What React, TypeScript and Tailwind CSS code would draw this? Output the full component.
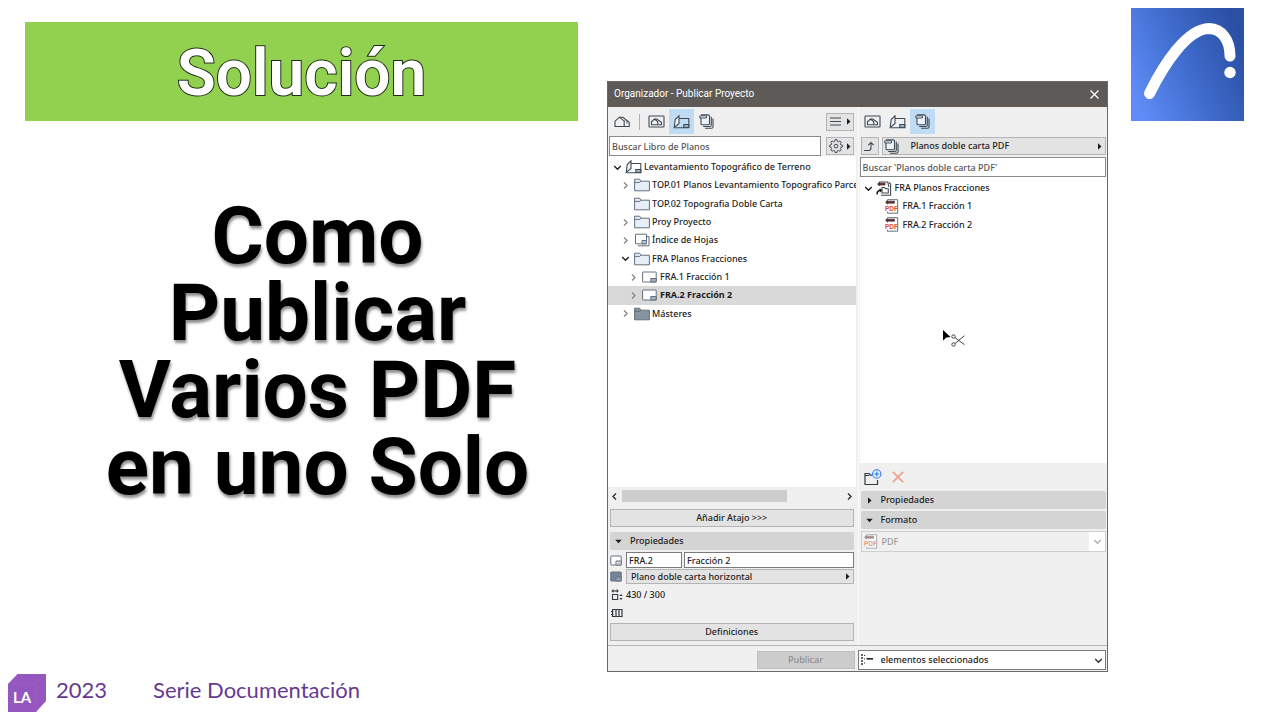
import type { ReactNode } from "react";
import clsx from "clsx";

const INK = "#3f4a55";

interface IconProps {
  className?: string;
}

/* ---------- Toolbar and tree icons ---------- */

function HouseIcon() {
  return (
    <svg width="17" height="13" viewBox="0 0 17 13" fill="none" stroke={INK} strokeWidth="1.1">
      <path d="M1 11.5V6.2L5.5 2.2l4.7 4v5.3zM5.5 2.2h3.4l6.3 5v4.3h-5" />
      <path d="M10.2 6.2l1.6-1.600M13 5.600v3" strokeWidth=".8" />
    </svg>
  );
}

function ViewIcon() {
  return (
    <svg width="17" height="13" viewBox="0 0 17 13" fill="none" stroke={INK} strokeWidth="1.1">
      <rect x="1" y="1" width="15" height="11" rx=".5" />
      <path d="M3.5 9.8V6.8L6.5 4l3.3 2.8v3zM6.5 4h2.3l4.7 3.3v2.5H9.8" />
    </svg>
  );
}

function BookIcon() {
  return (
    <svg width="17" height="14" viewBox="0 0 17 14" fill="none" stroke={INK} strokeWidth="1.1">
      <path d="M5 3.5h10.800v9.300H1.500" />
      <path d="M1.200 12.500L2.200 4.500 6 .8v7.700z" fill="#eef3f8" />
      <path d="M10.800 12.500V9.500h5v3z" fill="#9fb0c0" />
    </svg>
  );
}

function PublisherIcon() {
  return (
    <svg width="15" height="15" viewBox="0 0 15 15" fill="none" stroke={INK} strokeWidth="1.1">
      <path d="M6 14.200h6.500q1.500 0 1.500-1.500V4.500" />
      <path d="M4.200 12.500h6.600q1.500 0 1.500-1.500V2.800" />
      <path d="M2 4v5.500q0 1.300 1.300 1.300h5.900q1.300 0 1.300-1.300V2.200q0-1.300-1.300-1.300H2" fill="#eef3f8" />
      <path d="M.8 1.800h6.700v2.200H.8z" fill="#dfe6ec" strokeWidth=".9" />
    </svg>
  );
}

function FolderIcon({ dark = false }: { dark?: boolean }) {
  return (
    <svg width="16" height="14" viewBox="0 0 16 14" stroke="#64707c">
      <path d="M.6 12.8V1.2h5l1.2 2h8.6v9.6z" fill={dark ? "#8795a3" : "#e6eef8"} />
      <path d="M.6 4.4h5.2l1-1.2" fill="none" />
    </svg>
  );
}

function LayoutIcon() {
  return (
    <svg width="15" height="12" viewBox="0 0 15 12" fill="#fff" stroke="#64707c">
      <rect x=".6" y="1" width="13.6" height="10" rx=".5" />
      <path d="M8.800 11V7.500h5.400V11z" fill="#9fb0c0" />
    </svg>
  );
}

/* Compact version of the layout icon, for the property rows */
function SheetIcon({ filled = false }: { filled?: boolean }) {
  return (
    <svg width="12" height="11" viewBox="0 0 12 11" stroke="#64707c">
      <rect x=".8" y="1" width="10.400" height="9" rx=".5" fill={filled ? "#73859a" : "#fff"} />
      <path d="M6 10V6h5.200v4z" fill={filled ? "#8fa3b7" : "#e6eef8"} />
      <path d="M8 7.500h1.800v1.300H8z" fill="#8fa3b7" stroke="none" />
    </svg>
  );
}

function IndexIcon() {
  return (
    <svg width="16" height="14" viewBox="0 0 16 14" fill="#fff" stroke="#64707c">
      <path d="M4 12.800h11V3.500h-2" fill="none" />
      <path d="M1.500 1.200h11v9.600h-11z" />
      <path d="M8 10.800V7.500h4.500v3.300z" fill="#b9c7d4" />
    </svg>
  );
}

function PdfIcon({ className }: IconProps) {
  return (
    <svg className={className} width="14" height="15" viewBox="0 0 14 15" fill="none">
      <path d="M2.500 5.500V.7h10.200v13.500H2.500v-1.500" fill="#fff" stroke="#64707c" />
      <path d="M1 2.200h8.500v2H1z" fill="#6d2322" stroke="#3a4046" strokeWidth=".7" />
      <text x="0" y="12" fill="#dd4e2c" fontFamily="Liberation Sans, sans-serif" fontSize="6.500" fontWeight="700">
        PDF
      </text>
    </svg>
  );
}

function LinkedFolderIcon() {
  return (
    <svg width="16" height="15" viewBox="0 0 16 15" fill="none" stroke={INK} strokeWidth="1.1">
      <path d="M5 14.200h9.600V3L13 1.500" />
      <path d="M3.500 5V1h8.300l1 5" />
      <path d="M2 2.200h7v1.800H2z" fill="#8a2b2a" stroke="#3a2a2a" strokeWidth=".8" />
      <path d="M6 12V6.500h2.500l1 1.200h2.800V12z" fill="#fff" />
      <path d="M1 13.500c0-2.500 1-4 3.500-4.200" stroke="#111" strokeWidth="1.500" />
      <path d="M3.500 7.200l2.800 2-2.400 2.400z" fill="#111" stroke="none" />
    </svg>
  );
}

function GearIcon() {
  return (
    <svg width="14" height="14" viewBox="0 0 24 24" fill="none" stroke={INK} strokeWidth="1.700">
      <path d="M10.300 1.200h3.400l.6 2.800 2 .8 2.400-1.500 2.300 2.400-1.500 2.400.8 2 2.800.6v2.900l-2.800.6-.8 2 1.500 2.400-2.300 2.400-2.400-1.500-2 .8-.6 2.800h-3.400l-.6-2.800-2-.8-2.400 1.500L3 18.600l1.500-2.400-.8-2L1 13.600v-2.900l2.700-.6.8-2L3 5.700l2.300-2.400 2.400 1.500 2-.8z" />
      <circle cx="12" cy="12.200" r="3.200" />
    </svg>
  );
}

function MenuIcon() {
  return (
    <svg width="11" height="9" viewBox="0 0 11 9" stroke={INK} strokeWidth="1.100">
      <path d="M0 1h11M0 4.500h11M0 8h11" />
    </svg>
  );
}

function UpIcon() {
  return (
    <svg width="13" height="11" viewBox="0 0 13 11" fill="none" stroke={INK} strokeWidth="1.100">
      <path d="M1 9.500h4.200q2.800 0 2.800-2.800V1.800M5.300 4.200L8 1.500l2.700 2.700" />
    </svg>
  );
}

function NewFolderIcon() {
  return (
    <svg width="18" height="17" viewBox="0 0 18 17" fill="none">
      <path d="M8 6.200H6.200l-1-1.700H1v11h12.500V11" stroke="#333b42" strokeWidth="1.200" />
      <path d="M1 6.500h4.200" stroke="#333b42" />
      <circle cx="12.700" cy="5" r="4.200" fill="#e8f1ff" stroke="#3478e5" strokeWidth="1.100" />
      <path d="M12.700 2.500v5M10.200 5h5" stroke="#3478e5" strokeWidth="1.200" />
    </svg>
  );
}

function DeleteIcon() {
  return (
    <svg width="12" height="12" viewBox="0 0 12 12" stroke="#efa28f" strokeWidth="1.800">
      <path d="M.8.8l10.400 10.400M11.200.8L.8 11.200" />
    </svg>
  );
}

function SizeIcon() {
  return (
    <svg width="13" height="12" viewBox="0 0 13 12" fill="none" stroke="#333b42" strokeWidth="1.100">
      <path d="M2.500 5.500h5.200v5H2.500z" />
      <path d="M3 2h4" />
      <path d="M3.500 0v4L1.300 2zM6.700 0v4l2.200-2zM9.300 7h3.400L11 5zM9.300 9h3.400L11 11z" fill="#333b42" stroke="none" />
    </svg>
  );
}

function RevisionIcon() {
  return (
    <svg width="13" height="10" viewBox="0 0 13 10" fill="none" stroke="#333b42" strokeWidth="1.200">
      <path d="M2.500 1.500h9.500v7H2.500zM6 1.500v7M9 1.500v7M1 3.500h2.500M1 6.500h2.500" />
    </svg>
  );
}

function ItemsIcon() {
  return (
    <svg width="12" height="12" viewBox="0 0 12 12" fill="none" stroke="#222">
      <path d="M1 0v12" strokeWidth="1.400" strokeDasharray="2 1" />
      <path d="M3 1.500h2M3 5h2M3 9h2" strokeDasharray="1 1" />
      <path d="M5.500 4.800H12" strokeWidth="1.600" />
    </svg>
  );
}

function Arrow({ dir }: { dir: "right" | "down" }) {
  return (
    <svg className="shrink-0" width="7" height="7" viewBox="0 0 7 7" fill="#1c1c1c">
      <path d={dir === "right" ? "M2 .3l3.500 3.200L2 6.700z" : "M.3 1.800h6.400L3.500 5.300z"} />
    </svg>
  );
}

function Chevron({ dir, color = "#333" }: { dir: "left" | "right" | "down"; color?: string }) {
  const paths = { left: "M6 1.500l-3 3 3 3", right: "M3 1.500l3 3-3 3", down: "M1.200 3l3.300 3.300L7.800 3" };
  return (
    <svg className="shrink-0" width="9" height="9" viewBox="0 0 9 9" fill="none" stroke={color} strokeWidth="1.400">
      <path d={paths[dir]} />
    </svg>
  );
}

/* ---------- Dialog parts ---------- */

function ToolButton({ label, active, children }: { label: string; active?: boolean; children: ReactNode }) {
  return (
    <button
      aria-label={label}
      className={clsx("flex size-[25px] items-center justify-center", active && "bg-[#bfdcf4]")}
    >
      {children}
    </button>
  );
}

function MenuButton({ label, children }: { label: string; children: ReactNode }) {
  return (
    <button
      aria-label={label}
      className="flex h-[18px] w-7 items-center justify-between border border-[#b4b4b4] bg-[#e3e3e3] pr-px pl-0.5"
    >
      <span className="flex w-3.5 justify-center">{children}</span>
      <Arrow dir="right" />
    </button>
  );
}

function SectionHeader({ label, open }: { label: string; open?: boolean }) {
  return (
    <button aria-expanded={!!open} className="flex h-[18px] w-full items-center gap-2 rounded-xs bg-[#d4d4d4] pl-[5px]">
      <Arrow dir={open ? "down" : "right"} />
      {label}
    </button>
  );
}

interface TreeItem {
  label: string;
  icon: ReactNode;
  indent: string;
  state?: "open" | "closed";
  selected?: boolean;
}

const LAYOUT_TREE: TreeItem[] = [
  { label: "Levantamiento Topográfico de Terreno", icon: <BookIcon />, indent: "pl-[5px]", state: "open" },
  { label: "TOP.01 Planos Levantamiento Topografico Parce", icon: <FolderIcon />, indent: "pl-[13px]", state: "closed" },
  { label: "TOP.02 Topografia Doble Carta", icon: <FolderIcon />, indent: "pl-[13px]" },
  { label: "Proy Proyecto", icon: <FolderIcon />, indent: "pl-[13px]", state: "closed" },
  { label: "Índice de Hojas", icon: <IndexIcon />, indent: "pl-[13px]", state: "closed" },
  { label: "FRA Planos Fracciones", icon: <FolderIcon />, indent: "pl-[13px]", state: "open" },
  { label: "FRA.1 Fracción 1", icon: <LayoutIcon />, indent: "pl-[21px]", state: "closed" },
  { label: "FRA.2 Fracción 2", icon: <LayoutIcon />, indent: "pl-[21px]", state: "closed", selected: true },
  { label: "Másteres", icon: <FolderIcon dark />, indent: "pl-[13px]", state: "closed" },
];

const PUBLISHER_TREE: TreeItem[] = [
  { label: "FRA Planos Fracciones", icon: <LinkedFolderIcon />, indent: "pl-1", state: "open" },
  { label: "FRA.1 Fracción 1", icon: <PdfIcon />, indent: "pl-3" },
  { label: "FRA.2 Fracción 2", icon: <PdfIcon />, indent: "pl-3" },
];

function TreeRow({ label, icon, indent, state, selected }: TreeItem) {
  return (
    <li
      className={clsx(
        "flex items-center overflow-hidden whitespace-nowrap",
        indent,
        selected && "bg-[#d9d9d9] font-bold"
      )}
    >
      <span className="w-3 shrink-0">
        {state && <Chevron dir={state === "open" ? "down" : "right"} color={state === "open" ? "#222" : "#8a8a8a"} />}
      </span>
      <span className="flex w-[17px] shrink-0 justify-center">{icon}</span>
      <span className="ml-0.5">{label}</span>
    </li>
  );
}

function LayoutPane() {
  return (
    <section className="flex min-w-0 flex-col pr-0.5">
      <div className="flex h-[29px] items-center pr-0.5 pl-0.5">
        <ToolButton label="Mapa de Proyecto">
          <HouseIcon />
        </ToolButton>
        <span className="mx-1 h-4 w-px bg-[#b0b0b0]" />
        <ToolButton label="Mapa de Vistas">
          <ViewIcon />
        </ToolButton>
        <ToolButton label="Libro de Planos" active>
          <BookIcon />
        </ToolButton>
        <ToolButton label="Conjuntos de Publicador">
          <PublisherIcon />
        </ToolButton>
        <div className="flex-1" />
        <MenuButton label="Menú">
          <MenuIcon />
        </MenuButton>
      </div>
      <div className="flex items-center gap-[5px] pr-0.5 pl-px">
        <input
          aria-label="Buscar Libro de Planos"
          placeholder="Buscar Libro de Planos"
          className="h-5 min-w-0 flex-1 border border-[#8a8a8a] bg-white px-0.5 placeholder:text-[#555]"
        />
        <MenuButton label="Opciones de búsqueda">
          <GearIcon />
        </MenuButton>
      </div>
      <div className="min-h-[170px] flex-1 bg-white pt-0.5">
        <ul className="grid h-[165px] auto-rows-fr">
          {LAYOUT_TREE.map((item) => (
            <TreeRow key={item.label} {...item} />
          ))}
        </ul>
      </div>
      <div className="flex h-[18px] items-center gap-[3px] px-0.5">
        <Chevron dir="left" />
        <div className="h-3 flex-1">
          <div className="h-full w-3/4 bg-[#cdcdcd]" />
        </div>
        <Chevron dir="right" />
      </div>
      <div className="flex flex-col px-0.5 pb-1">
        <button className="mt-1 h-[18px] border border-[#b4b4b4] bg-[#e3e3e3]">Añadir Atajo &gt;&gt;&gt;</button>
        <div className="mt-[5px]">
          <SectionHeader label="Propiedades" open />
        </div>
        <div className="mt-0.5 flex items-center gap-0.5">
          <span className="w-3.5 shrink-0">
            <SheetIcon />
          </span>
          <input aria-label="ID" defaultValue="FRA.2" className="h-4 w-14 border border-[#7a7a7a] bg-white px-0.5" />
          <input
            aria-label="Nombre"
            defaultValue="Fracción 2"
            className="h-4 min-w-0 flex-1 border border-[#7a7a7a] bg-white px-0.5"
          />
        </div>
        <div className="mt-px flex items-center gap-0.5">
          <span className="w-3.5 shrink-0">
            <SheetIcon filled />
          </span>
          <button className="flex h-[15px] flex-1 items-center justify-between border border-[#b4b4b4] bg-[#e3e3e3] pr-0.5 pl-1">
            Plano doble carta horizontal
            <Arrow dir="right" />
          </button>
        </div>
        <div className="mt-0.5 flex h-[18px] items-center gap-0.5">
          <span className="w-3.5 shrink-0">
            <SizeIcon />
          </span>
          430 / 300
        </div>
        <div className="flex h-[18px] items-center">
          <RevisionIcon />
        </div>
        <button className="mt-px h-[18px] border border-[#b4b4b4] bg-[#e3e3e3]">Definiciones</button>
      </div>
    </section>
  );
}

function PublisherPane() {
  return (
    <section className="flex min-w-0 flex-col border-l border-[#fafafa] pl-px">
      <div className="flex h-[29px] items-center">
        <ToolButton label="Mapa de Vistas">
          <ViewIcon />
        </ToolButton>
        <ToolButton label="Libro de Planos">
          <BookIcon />
        </ToolButton>
        <ToolButton label="Conjuntos de Publicador" active>
          <PublisherIcon />
        </ToolButton>
      </div>
      <div className="flex h-5 items-center gap-[3px] px-px">
        <button
          aria-label="Subir un nivel"
          className="flex h-[18px] w-[18px] items-center justify-center border border-[#b4b4b4] bg-[#e3e3e3]"
        >
          <UpIcon />
        </button>
        <button className="flex h-[18px] flex-1 items-center gap-3 border border-[#b4b4b4] bg-[#e3e3e3] pr-0.5 pl-px">
          <PublisherIcon />
          <span className="flex-1 text-left">Planos doble carta PDF</span>
          <Arrow dir="right" />
        </button>
      </div>
      <input
        aria-label="Buscar en Planos doble carta PDF"
        placeholder="Buscar 'Planos doble carta PDF'"
        className="mt-px mr-px h-5 border border-[#8a8a8a] bg-white px-0.5 placeholder:text-[#555]"
      />
      <div className="relative flex-1 bg-white pt-0.5">
        <ul className="grid h-[55px] auto-rows-fr">
          {PUBLISHER_TREE.map((item) => (
            <TreeRow key={item.label} {...item} />
          ))}
        </ul>
        {/* Mouse pointer with the cut cursor */}
        <svg className="absolute top-[152px] left-[82px]" width="26" height="20" viewBox="0 0 26 20">
          <path d="M1 1l7.500 7-4 .4L1 11.500z" fill="#000" />
          <g fill="none" stroke="#444">
            <circle cx="11.500" cy="7.500" r="1.700" />
            <circle cx="11.500" cy="15.500" r="1.700" />
            <path d="M13 8.500l9.500 7.200M13 14.500l9.500-7.800" />
          </g>
        </svg>
      </div>
      <div className="flex h-7 items-center gap-2.5 pl-1">
        <button aria-label="Nueva carpeta">
          <NewFolderIcon />
        </button>
        <button aria-label="Borrar">
          <DeleteIcon />
        </button>
      </div>
      <div className="flex flex-col gap-0.5 pr-px pb-[93px] pl-px">
        <SectionHeader label="Propiedades" />
        <SectionHeader label="Formato" open />
        <div className="flex h-[21px] items-center border border-[#cfcfcf] pl-0.5">
          <PdfIcon className="opacity-50" />
          <select
            aria-label="Formato"
            disabled
            defaultValue="PDF"
            className="ml-1 h-full flex-1 appearance-none text-[#9b9b9b]"
          >
            <option>PDF</option>
          </select>
          <span className="flex h-full w-4 items-center justify-center bg-white">
            <Chevron dir="down" color="#b0b0b0" />
          </span>
        </div>
      </div>
    </section>
  );
}

function OrganizerDialog() {
  return (
    <div
      role="dialog"
      aria-label="Organizador - Publicar Proyecto"
      className="mt-[81px] mb-12 flex flex-col border border-[#6b6866] bg-[#f0f0f0] font-['Noto_Sans',sans-serif] text-[9px] leading-3 font-medium text-[#1c1c1c]"
    >
      <header className="flex h-[25px] items-center justify-between bg-[#5e5a57] pr-2 pb-px pl-1.5 font-['Roboto',sans-serif] text-[10px] font-normal text-white">
        <h2>Organizador - Publicar Proyecto</h2>
        <button aria-label="Cerrar">
          <svg width="9" height="9" viewBox="0 0 9 9" stroke="#fff" strokeWidth="1.200">
            <path d="M.5.5l8 8M8.500.5l-8 8" />
          </svg>
        </button>
      </header>
      <div className="grid flex-1 grid-cols-2">
        <LayoutPane />
        <PublisherPane />
      </div>
      <footer className="grid grid-cols-2 border-t border-[#b4b4b4] pt-1 pb-px">
        <div className="flex items-center justify-end pr-[3px]">
          <button disabled className="h-[18px] w-[98px] border border-[#bfbfbf] bg-[#cccccc] text-[#8e8e8e]">
            Publicar
          </button>
        </div>
        <div className="mr-px flex h-5 items-center border border-[#7a7a7a] bg-white pr-0.5 pl-0.5">
          <ItemsIcon />
          <select aria-label="Elementos a publicar" className="ml-2 h-full flex-1 appearance-none">
            <option>elementos seleccionados</option>
          </select>
          <Chevron dir="down" />
        </div>
      </footer>
    </div>
  );
}

function ArchLogo() {
  return (
    <svg className="mt-2 w-full" viewBox="0 0 113 113" fill="none">
      <defs>
        <linearGradient id="arch" x1="0" y1=".75" x2="1" y2=".3">
          <stop offset="0" stopColor="#5f8df8" />
          <stop offset=".5" stopColor="#406ccd" />
          <stop offset="1" stopColor="#2a4fa3" />
        </linearGradient>
      </defs>
      <path d="M0 0h113v113H0z" fill="url(#arch)" />
      <path d="M18.500 85.500C33 56 56 21 78 20.500C91 21 99 32 99 48" stroke="#fff" strokeWidth="11" strokeLinecap="round" />
      <circle cx="99" cy="64.500" r="5.700" fill="#fff" />
    </svg>
  );
}

function SeriesLogo() {
  return (
    <svg width="38" height="38" viewBox="0 0 38 38">
      <path d="M0 10L9.500 0H38v27L28 38H0z" fill="#9457c0" />
      <path d="M0 10h28v28M28 10L38 0" fill="none" stroke="#a45bc4" strokeWidth=".8" />
      <text x="5" y="29" fill="#fff" fontFamily="Lato, sans-serif" fontSize="15" fontWeight="700">
        LA
      </text>
    </svg>
  );
}

export default function App() {
  return (
    <main className="grid min-h-screen grid-cols-[559fr_501fr_113fr] gap-x-[23px] bg-white pr-9 pl-[25px]">
      <div className="flex flex-col pt-[22px] pr-1.5">
        <div className="bg-[#92d150] pt-4 pb-[11px] text-center font-['Roboto',sans-serif] text-[64px] leading-[72px] font-semibold text-white [-webkit-text-stroke:2px_#1d2b12] [paint-order:stroke_fill]">
          Solución
        </div>
        <h1 className="mt-[77px] pl-8 text-center font-['Roboto',sans-serif] text-[80px] leading-[77px] font-bold text-black [text-shadow:1px_3px_3px_rgba(0,0,0,0.45)]">
          <span className="block whitespace-nowrap">Como</span>
          <span className="block whitespace-nowrap">Publicar</span>
          <span className="block whitespace-nowrap">Varios PDF</span>
          <span className="block whitespace-nowrap">en uno Solo</span>
        </h1>
        <footer className="mt-auto -ml-[17px] flex items-start pb-2 font-['Lato',sans-serif] text-[22px] leading-8 text-[#663a92]">
          <SeriesLogo />
          <span className="ml-2.5">2023</span>
          <span className="ml-[46px]">Serie Documentación</span>
        </footer>
      </div>
      <OrganizerDialog />
      <ArchLogo />
    </main>
  );
}
